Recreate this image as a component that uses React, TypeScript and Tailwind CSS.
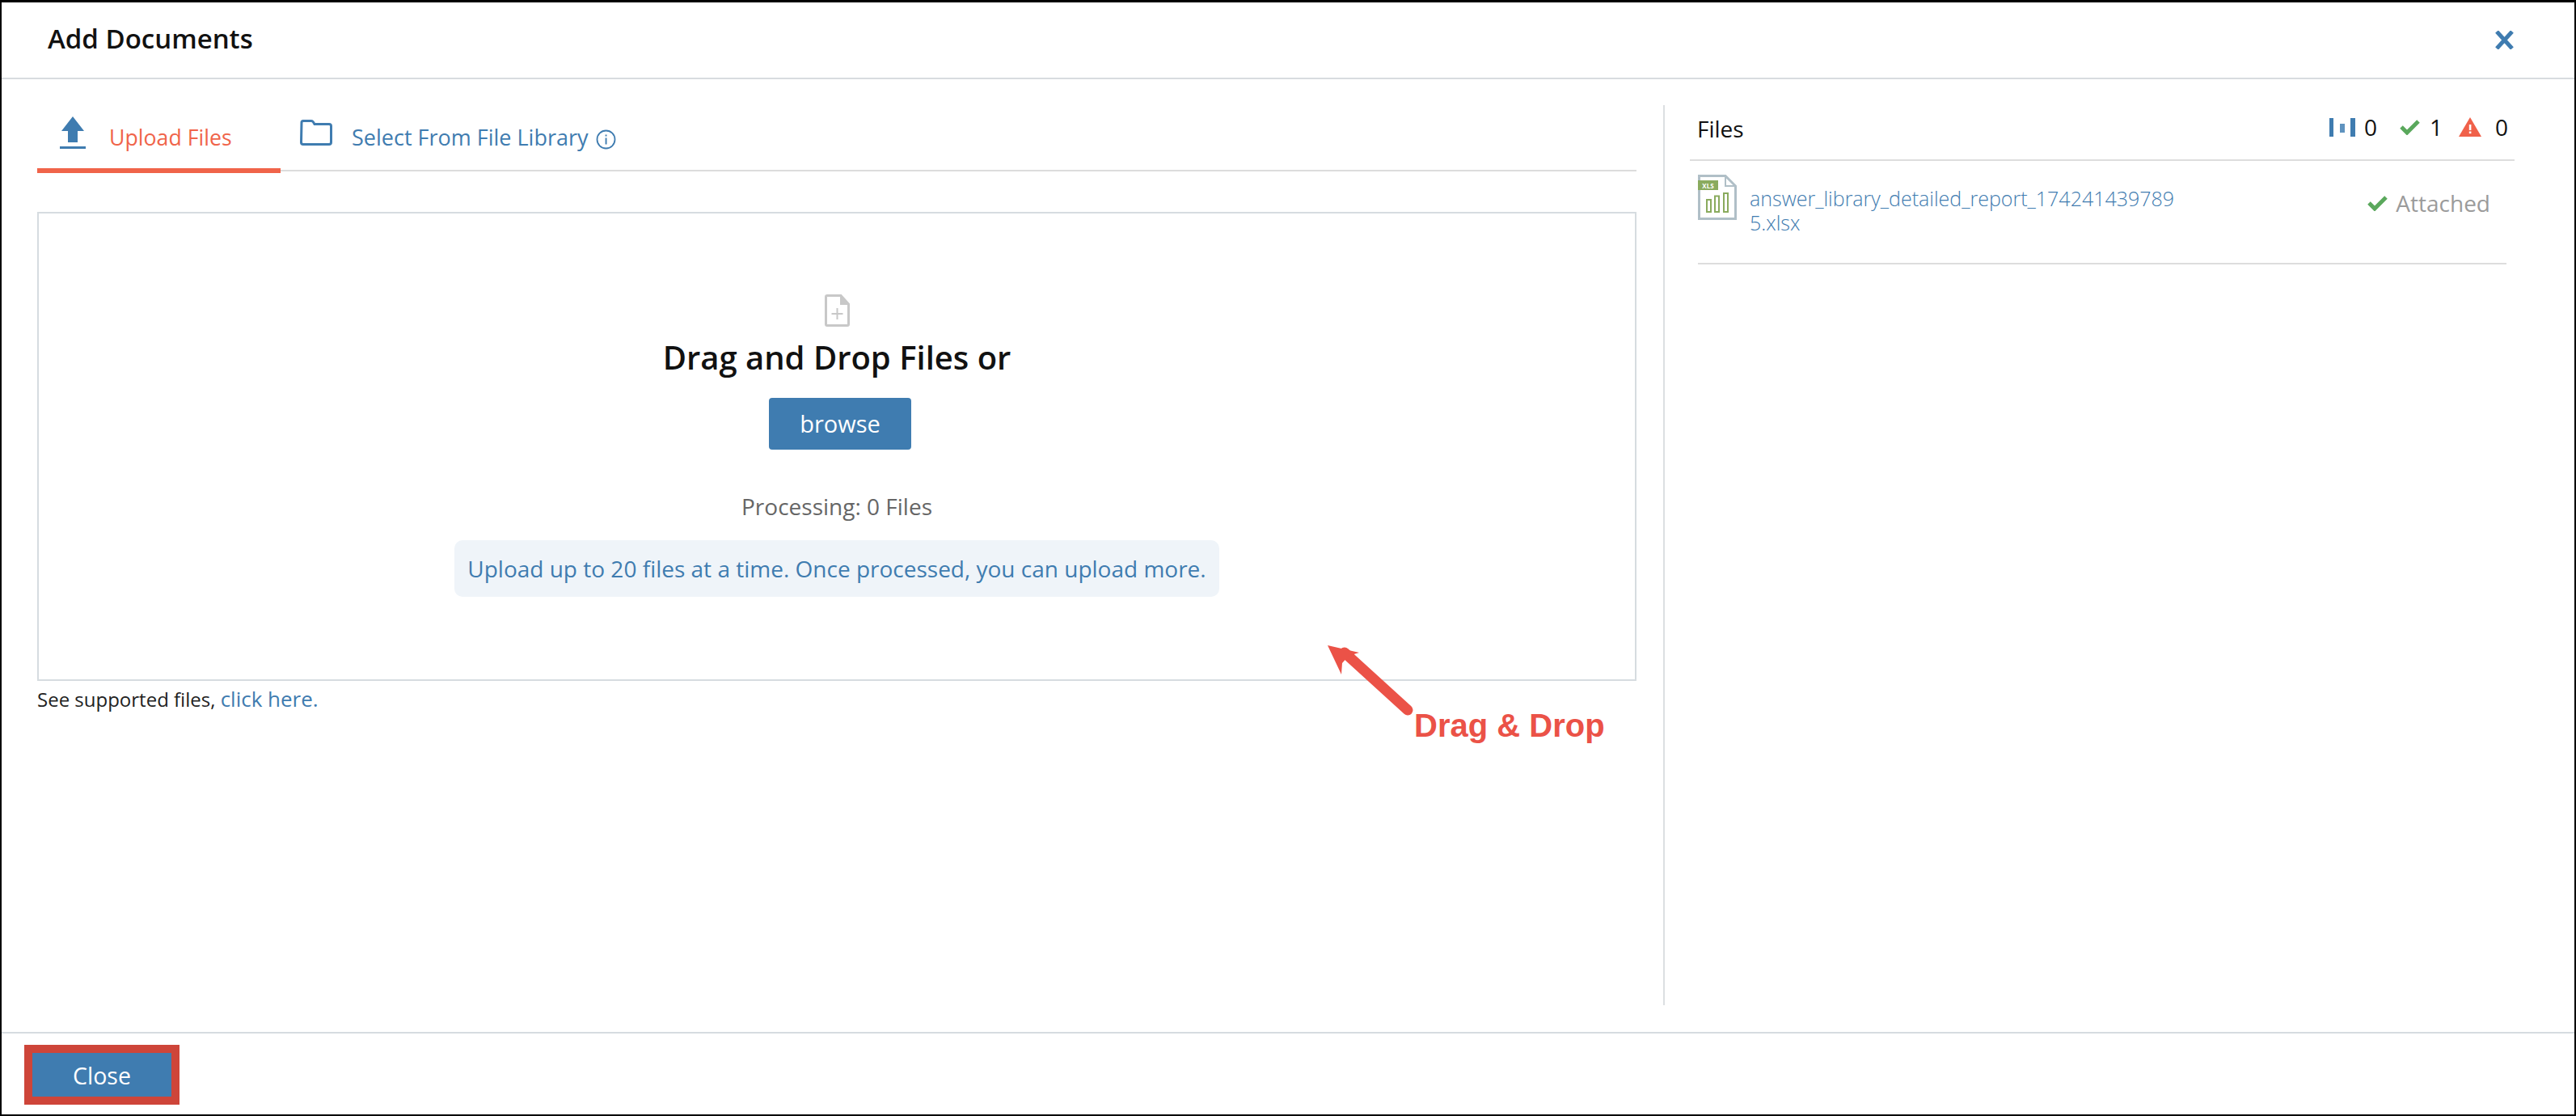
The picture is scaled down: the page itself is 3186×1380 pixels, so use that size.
function UploadIcon() {
  return (
    <svg width="32" height="40" viewBox="0 0 32 40" className="shrink-0">
      <path d="M16 0 L30 18 H22 V32 H10 V18 H2 Z" fill="#3f7cb0" />
      <rect x="0" y="37" width="32" height="3" fill="#3f7cb0" />
    </svg>
  );
}

function FolderIcon() {
  return (
    <svg width="40" height="32" viewBox="0 0 40 32" className="shrink-0">
      <path
        d="M2 3.5 Q2 1.5 4 1.5 H14 Q15.5 1.5 16.5 3 L18 5.5 H36 Q38.5 5.5 38.5 8 V28 Q38.5 30.5 36 30.5 H4 Q1.5 30.5 1.5 28 Z"
        fill="none"
        stroke="#3f7cb0"
        strokeWidth="3"
      />
    </svg>
  );
}

function InfoIcon() {
  return (
    <svg width="25" height="25" viewBox="0 0 25 25" className="shrink-0">
      <circle cx="12.5" cy="12.5" r="11" fill="none" stroke="#3f7cb0" strokeWidth="1.8" />
      <rect x="11.6" y="10.5" width="1.9" height="8" fill="#3f7cb0" />
      <rect x="11.6" y="6.5" width="1.9" height="2" fill="#3f7cb0" />
    </svg>
  );
}

function FilePlusIcon() {
  return (
    <svg width="31" height="40" viewBox="0 0 31 40">
      <path d="M1.5 3 Q1.5 1.5 3 1.5 H20 L29.5 12 V37 Q29.5 38.5 28 38.5 H3 Q1.5 38.5 1.5 37 Z" fill="none" stroke="#c8c8c8" strokeWidth="3" />
      <path d="M19 1.5 L30 13 H19 Z" fill="#c8c8c8" />
      <path d="M15.5 17 V31 M8.5 24 H22.5" stroke="#c8c8c8" strokeWidth="2" />
    </svg>
  );
}

function CheckIcon() {
  return (
    <svg width="25" height="20" viewBox="0 0 25 20" className="shrink-0">
      <path d="M2 10 L9 17 L23 3" fill="none" stroke="#5aa85c" strokeWidth="5" />
    </svg>
  );
}

function QueueIcon() {
  return (
    <svg width="32" height="23" viewBox="0 0 32 23" className="shrink-0">
      <rect x="0" y="0" width="5" height="23" fill="#3f7cb0" />
      <rect x="13" y="7" width="6" height="11" fill="#5f93bf" />
      <rect x="26" y="0" width="6" height="23" fill="#3f7cb0" />
    </svg>
  );
}

function WarnIcon() {
  return (
    <svg width="28" height="24" viewBox="0 0 28 24" className="shrink-0">
      <path d="M14 0 L28 24 H0 Z" fill="#f0614a" />
      <rect x="12.8" y="9" width="2.6" height="7" fill="#fff" />
      <rect x="12.8" y="17.5" width="2.6" height="2.6" fill="#fff" />
    </svg>
  );
}

function XlsIcon() {
  return (
    <svg width="48" height="56" viewBox="0 0 48 56" className="shrink-0">
      <path d="M1.5 1.5 H34 L46.5 14 V54.5 H1.5 Z" fill="#fff" stroke="#b0bfc7" strokeWidth="3" />
      <path d="M34 1.5 V14 H46.5" fill="none" stroke="#b0bfc7" strokeWidth="2" />
      <rect x="0" y="7" width="25" height="12" fill="#8aab5e" />
      <text x="12.5" y="16.5" textAnchor="middle" fontSize="8" fontWeight="700" fill="#fff" fontFamily="'Open Sans', sans-serif">XLS</text>
      <rect x="11" y="31" width="5" height="15" fill="none" stroke="#8aab5e" strokeWidth="2" />
      <rect x="21" y="26.5" width="5" height="19.5" fill="none" stroke="#8aab5e" strokeWidth="2" />
      <rect x="32" y="23" width="5" height="23" fill="none" stroke="#8aab5e" strokeWidth="2" />
    </svg>
  );
}

function Annotation() {
  return (
    <div className="absolute left-[1638px] top-[792px] w-[350px] h-[130px]">
      <svg width="110" height="95" viewBox="0 0 110 95" className="absolute left-0 top-0">
        <path d="M101 83 L23 12" stroke="#eb5247" strokeWidth="13" strokeLinecap="round" />
        <path d="M2 3 L41 12 L28 16 L20 25 L19 39 Z" fill="#eb5247" />
      </svg>
      <span className="absolute left-[109px] top-[79px] font-['Liberation_Sans',sans-serif] font-bold text-[40px] leading-[46px] text-[#eb5247] whitespace-nowrap">
        Drag &amp; Drop
      </span>
    </div>
  );
}

export default function App() {
  return (
    <div className="relative w-[3186px] h-[1380px] bg-white flex flex-col border-t-[3px] border-x-2 border-b-2 border-black font-['Open_Sans',sans-serif] text-[28px] text-[#111]">
      <div className="h-[95px] shrink-0 flex items-center justify-between border-b-2 border-[#d8dcdf] pl-[57px] pr-[75px]">
        <h1 className="font-semibold text-[33px] leading-none -mt-[5px]">Add Documents</h1>
        <svg width="23" height="23" viewBox="0 0 23 23">
          <path d="M2 1 L21 22 M21 1 L2 22" stroke="#3f7cb0" strokeWidth="5" />
        </svg>
      </div>

      <div className="flex-1 flex pl-[44px]">
        <div className="w-[1978px] shrink-0 pt-[46px]">
          <div className="flex border-b-2 border-[#dcdcdc] h-[68px]">
            <div className="w-[301px] h-[70px] flex items-start gap-[29px] pl-[28px] border-b-[6px] border-[#f0644a]">
              <UploadIcon />
              <span className="text-[#f0644a] text-[26.7px] leading-[36px] mt-[8px]">Upload Files</span>
            </div>
            <div className="flex items-start ml-[24px] pt-[4px]">
              <FolderIcon />
              <span className="ml-[24px] text-[#3f7cb0] text-[27px] font-medium leading-[36px] mt-[4px]">Select From File Library</span>
              <span className="ml-[9px] mt-[12px]"><InfoIcon /></span>
            </div>
          </div>

          <div className="mt-[50px] h-[580px] border-2 border-[#d6dce0] flex flex-col items-center pt-[100px]">
            <FilePlusIcon />
            <div className="mt-[12px] font-semibold text-[40px] leading-[52px]">Drag and Drop Files or</div>
            <button className="mt-[24px] ml-[8px] w-[176px] h-[64px] rounded-[4px] bg-[#3f7cb0] text-white font-medium text-[29px]">browse</button>
            <div className="mt-[52px] text-[28px] leading-[36px] text-[#666]">Processing: 0 Files</div>
            <div className="mt-[24px] h-[70px] px-[16px] flex items-center rounded-[10px] bg-[#eff4f9] text-[#3f7cb0] text-[28px]">
              Upload up to 20 files at a time. Once processed, you can upload more.
            </div>
          </div>
          <p className="mt-[6px] text-[24px] leading-[32px] text-[#222]">
            See supported files, <span className="text-[#3f7cb0] text-[26px]">click here.</span>
          </p>
        </div>

        <div className="ml-[33px] mt-[32px] h-[1113px] w-[1053px] shrink-0 border-l-2 border-[#dcdfe2] pl-[31px]">
          <div className="w-[1020px] h-[69px] pl-[9px] pr-[8px] flex items-start justify-between border-b-2 border-[#dddddd]">
            <span className="leading-[36px] mt-[11px]">Files</span>
            <div className="flex items-center mt-[15px] leading-[24px]">
              <QueueIcon />
              <span className="ml-[11px]">0</span>
              <span className="ml-[28px]"><CheckIcon /></span>
              <span className="ml-[12px]">1</span>
              <span className="ml-[20px]"><WarnIcon /></span>
              <span className="ml-[17px]">0</span>
            </div>
          </div>
          <div className="ml-[10px] w-[1000px] h-[128px] flex items-start border-b-2 border-[#dddddd] pt-[17px] pr-[20px]">
            <XlsIcon />
            <div className="ml-[16px] mt-[14px] w-[545px] text-[25px] leading-[30px] font-light text-[#3f7cb0] break-all">
              answer_library_detailed_report_1742414397895.xlsx
            </div>
            <div className="ml-auto mt-[17px] flex items-center gap-[10px] text-[#9b9b9b]">
              <CheckIcon />
              <span className="leading-[36px]">Attached</span>
            </div>
          </div>
        </div>
      </div>

      <div className="h-[102px] shrink-0 border-t-2 border-[#d6dce0] pl-[28px] pt-[14px]">
        <button className="w-[192px] h-[74px] border-[10px] border-[#ce4539] bg-[#3f7cb0] text-white text-[28.5px] pt-[2px]">Close</button>
      </div>

      <Annotation />
    </div>
  );
}
